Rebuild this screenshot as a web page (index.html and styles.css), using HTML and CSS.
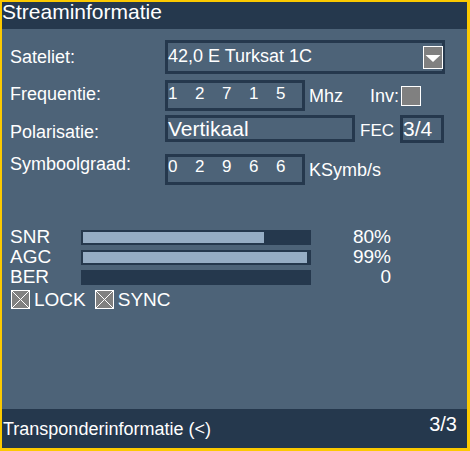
FILE: index.html
```html
<!DOCTYPE html>
<html>
<head>
<meta charset="utf-8">
<link rel="stylesheet" href="styles.css">
</head>
<body>
<div class="screen">
  <div class="header">Streaminformatie</div>
  <div class="main">
    <div class="row r1">
      <div class="label">Sateliet:</div>
      <div class="box sat">
        <span class="boxtext">42,0 E Turksat 1C</span>
        <span class="dropdown">
          <svg width="18" height="21" viewBox="0 0 18 21"><polygon points="1.5,8 16.5,8 9,15" fill="#fff"/></svg>
        </span>
      </div>
    </div>
    <div class="row r2">
      <div class="label">Frequentie:</div>
      <div class="box digits">
        <span>1</span><span>2</span><span>7</span><span>1</span><span>5</span>
      </div>
      <div class="unit">Mhz</div>
      <div class="unit inv">Inv:</div>
      <div class="check"></div>
    </div>
    <div class="row r3">
      <div class="label">Polarisatie:</div>
      <div class="box pol"><span class="big">Vertikaal</span></div>
      <div class="unit fec">FEC</div>
      <div class="box fecbox"><span class="big">3/4</span></div>
    </div>
    <div class="row r4">
      <div class="label">Symboolgraad:</div>
      <div class="box digits">
        <span>0</span><span>2</span><span>9</span><span>6</span><span>6</span>
      </div>
      <div class="unit">KSymb/s</div>
    </div>

    <div class="status">
      <div class="srow">
        <div class="slabel">SNR</div>
        <div class="bar"><div class="fill" style="width:80%"></div></div>
        <div class="pct">80%</div>
      </div>
      <div class="srow">
        <div class="slabel">AGC</div>
        <div class="bar"><div class="fill" style="width:99%"></div></div>
        <div class="pct">99%</div>
      </div>
      <div class="srow">
        <div class="slabel">BER</div>
        <div class="bar"><div class="fill" style="width:0%"></div></div>
        <div class="pct">0</div>
      </div>
      <div class="flags">
        <span class="xbox"><svg width="17" height="17" viewBox="0 0 17 17"><line x1="0" y1="0" x2="17" y2="17" stroke="#fff" stroke-width="1"/><line x1="17" y1="0" x2="0" y2="17" stroke="#fff" stroke-width="1"/></svg></span>
        <span class="flag">LOCK</span>
        <span class="xbox second"><svg width="17" height="17" viewBox="0 0 17 17"><line x1="0" y1="0" x2="17" y2="17" stroke="#fff" stroke-width="1"/><line x1="17" y1="0" x2="0" y2="17" stroke="#fff" stroke-width="1"/></svg></span>
        <span class="flag">SYNC</span>
      </div>
    </div>
  </div>
  <div class="footer">
    <div class="ftext">Transponderinformatie (&lt;)</div>
    <div class="page">3/3</div>
  </div>
</div>
</body>
</html>
```
FILE: styles.css
```css
* { box-sizing: border-box; }
html, body { margin: 0; padding: 0; }
body {
  width: 470px;
  height: 451px;
  background: #fcc900;
  font-family: "Liberation Sans", Arial, sans-serif;
  color: #fff;
}
.screen {
  width: 470px;
  height: 451px;
  padding: 2px 3px 3px 2px;
  display: flex;
  flex-direction: column;
}
.header {
  height: 27px;
  flex: none;
  background: #25384d;
  font-size: 21px;
  line-height: 20px;
  padding-left: 0;
}
.main {
  flex: 1;
  background: #4d6378;
  padding: 11px 0 0 8px;
}
.row {
  display: flex;
  align-items: flex-start;
}
.label {
  width: 155px;
  flex: none;
  font-size: 18px;
  line-height: 20px;
}
.unit {
  font-size: 18px;
  line-height: 20px;
  margin-left: 4px;
  margin-top: 6px;
}
.box {
  border: 3px solid #25384d;
  flex: none;
}
.r1 { height: 34px; }
.r1 .label { margin-top: 7px; }
.sat {
  width: 280px;
  height: 34px;
  display: flex;
  align-items: center;
  justify-content: space-between;
}
.boxtext {
  font-size: 18px;
  line-height: 20px;
  align-self: flex-start;
  margin-top: 3px;
}
.dropdown {
  width: 20px;
  height: 23px;
  border: 1px solid #fff;
  background: #808080;
  display: flex;
  margin-right: -1px;
}
.dropdown svg { display: block; }

.r2 { margin-top: 6px; height: 31px; }
.r2 .label { margin-top: 4px; }
.digits {
  width: 140px;
  height: 31px;
  display: flex;
  font-size: 17px;
  line-height: 19px;
  padding-top: 1px;
  padding-left: 0;
}
.digits span { width: 27px; flex: none; }
.r4 .digits { padding-top: 0; }
.inv { margin-left: 27px; }
.check {
  width: 20px;
  height: 20px;
  border: 1px solid #fff;
  background: #808080;
  margin-left: 2px;
  margin-top: 6px;
}

.r3 { margin-top: 4px; height: 28px; }
.r3 .label { margin-top: 7px; }
.big {
  font-size: 21px;
  line-height: 21px;
}
.pol { width: 190px; height: 27px; }
.fec { font-size: 17px; margin-left: 5px; }
.fecbox {
  width: 44px;
  height: 28px;
  margin-left: 6px;
}

.r4 { margin-top: 11px; height: 31px; }
.r4 .label { margin-top: 0; }

.status { margin-top: 42px; }
.srow {
  display: flex;
  align-items: flex-start;
  height: 20px;
  font-size: 19px;
  line-height: 20px;
}
.slabel { width: 71px; flex: none; }
.bar {
  width: 230px;
  height: 15px;
  margin-top: 3px;
  border: 2px solid #25384d;
  background: #25384d;
  flex: none;
}
.fill {
  height: 100%;
  background: #96adc4;
}
.pct {
  width: 80px;
  text-align: right;
}
.flags {
  display: flex;
  align-items: flex-start;
  margin-top: 3px;
  font-size: 19px;
  line-height: 20px;
}
.xbox {
  width: 19px;
  height: 19px;
  border: 1px solid #fff;
  background: #808080;
  margin-left: 1px;
  margin-right: 4px;
  display: flex;
}
.xbox svg { display: block; }
.xbox.second { margin-left: 9px; }

.footer {
  height: 39px;
  flex: none;
  background: #25384d;
  display: flex;
  justify-content: space-between;
  align-items: flex-start;
  padding: 0 10px 0 1px;
}
.ftext {
  font-size: 18px;
  line-height: 20px;
  margin-top: 10px;
}
.page {
  font-size: 20px;
  line-height: 22px;
  margin-top: 4px;
}
```
